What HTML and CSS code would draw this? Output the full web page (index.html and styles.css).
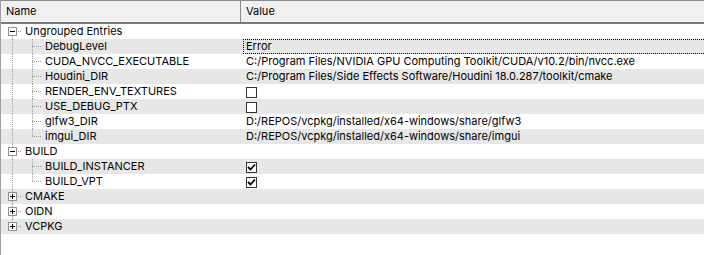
FILE: index.html
```html
<!DOCTYPE html>
<html>
<head>
<meta charset="utf-8">
<link rel="stylesheet" href="styles.css">
</head>
<body>
<div class="view">
  <div class="header">
    <div class="hcell name">Name</div>
    <div class="hcell">Value</div>
  </div>
  <div class="rows">
    <div class="row">
      <div class="ncell"><span class="br vbot h"><span class="exp minus"></span></span><span class="label">Ungrouped Entries</span></div>
      <div class="vcell"></div>
    </div>
    <div class="row alt">
      <div class="ncell"><span class="br vfull"></span><span class="br vfull h"></span><span class="label">DebugLevel</span></div>
      <div class="vcell focus">Error</div>
    </div>
    <div class="row">
      <div class="ncell"><span class="br vfull"></span><span class="br vfull h"></span><span class="label">CUDA_NVCC_EXECUTABLE</span></div>
      <div class="vcell">C:/Program Files/NVIDIA GPU Computing Toolkit/CUDA/v10.2/bin/nvcc.exe</div>
    </div>
    <div class="row alt">
      <div class="ncell"><span class="br vfull"></span><span class="br vfull h"></span><span class="label">Houdini_DIR</span></div>
      <div class="vcell">C:/Program Files/Side Effects Software/Houdini 18.0.287/toolkit/cmake</div>
    </div>
    <div class="row">
      <div class="ncell"><span class="br vfull"></span><span class="br vfull h"></span><span class="label">RENDER_ENV_TEXTURES</span></div>
      <div class="vcell"><span class="check"></span></div>
    </div>
    <div class="row alt">
      <div class="ncell"><span class="br vfull"></span><span class="br vfull h"></span><span class="label">USE_DEBUG_PTX</span></div>
      <div class="vcell"><span class="check"></span></div>
    </div>
    <div class="row">
      <div class="ncell"><span class="br vfull"></span><span class="br vfull h"></span><span class="label">glfw3_DIR</span></div>
      <div class="vcell">D:/REPOS/vcpkg/installed/x64-windows/share/glfw3</div>
    </div>
    <div class="row alt">
      <div class="ncell"><span class="br vfull"></span><span class="br vtop h"></span><span class="label">imgui_DIR</span></div>
      <div class="vcell">D:/REPOS/vcpkg/installed/x64-windows/share/imgui</div>
    </div>
    <div class="row">
      <div class="ncell"><span class="br vfull h"><span class="exp minus"></span></span><span class="label">BUILD</span></div>
      <div class="vcell"></div>
    </div>
    <div class="row alt">
      <div class="ncell"><span class="br vfull"></span><span class="br vfull h"></span><span class="label">BUILD_INSTANCER</span></div>
      <div class="vcell"><span class="check on"><svg width="9" height="9" viewBox="0 0 9 9"><path d="M1 4 L3.5 6.5 L8 1.5" fill="none" stroke="#000" stroke-width="1.8"/></svg></span></div>
    </div>
    <div class="row">
      <div class="ncell"><span class="br vfull"></span><span class="br vtop h"></span><span class="label">BUILD_VPT</span></div>
      <div class="vcell"><span class="check on"><svg width="9" height="9" viewBox="0 0 9 9"><path d="M1 4 L3.5 6.5 L8 1.5" fill="none" stroke="#000" stroke-width="1.8"/></svg></span></div>
    </div>
    <div class="row alt">
      <div class="ncell"><span class="br vfull h"><span class="exp plus"></span></span><span class="label">CMAKE</span></div>
      <div class="vcell"></div>
    </div>
    <div class="row">
      <div class="ncell"><span class="br vfull h"><span class="exp plus"></span></span><span class="label">OIDN</span></div>
      <div class="vcell"></div>
    </div>
    <div class="row alt">
      <div class="ncell"><span class="br vtop h"><span class="exp plus"></span></span><span class="label">VCPKG</span></div>
      <div class="vcell"></div>
    </div>
  </div>
</div>
</body>
</html>
```

FILE: styles.css
```css
html, body {
  margin: 0;
  padding: 0;
  background: #ffffff;
}

.view {
  width: 704px;
  height: 255px;
  box-sizing: border-box;
  border-left: 1px solid #a0a0a0;
  overflow: hidden;
  font-family: Inter, "Noto Sans", sans-serif;
  font-size: 11px;
  color: #000;
}

.header {
  display: grid;
  grid-template-columns: 240px 1fr;
  height: 24px;
  box-sizing: border-box;
  border-top: 1px solid #8a8a8a;
  border-bottom: 2px solid #7a7a7a;
  background: #f0f0f0;
}

.hcell {
  line-height: 21px;
  padding-left: 5px;
  white-space: nowrap;
}

.hcell.name {
  border-right: 1px solid #8a8a8a;
}

.rows {
  display: flex;
  flex-direction: column;
}

.row {
  display: grid;
  grid-template-columns: 241px 1fr;
  height: 15px;
  line-height: 15px;
  white-space: nowrap;
}

.row.alt {
  background: #e7e7e7;
}

.ncell {
  display: flex;
  padding-left: 1px;
  overflow: hidden;
}

.label {
  margin-left: 3px;
}

.br {
  display: flex;
  width: 20px;
  height: 15px;
  flex: none;
  --dv: repeating-linear-gradient(to bottom, #a0a0a0 0 1px, transparent 1px 2px);
  --dh: repeating-linear-gradient(to right, #a0a0a0 0 1px, transparent 1px 2px);
  background-repeat: no-repeat;
}

.br.vfull { background-image: var(--dv); background-position: 10px 0; background-size: 1px 15px; }
.br.vtop { background-image: var(--dv); background-position: 10px 0; background-size: 1px 8px; }
.br.vbot { background-image: var(--dv); background-position: 10px 8px; background-size: 1px 7px; }

.br.vfull.h { background-image: var(--dv), var(--dh); background-position: 10px 0, 10px 7px; background-size: 1px 15px, 10px 1px; }
.br.vtop.h { background-image: var(--dv), var(--dh); background-position: 10px 0, 10px 7px; background-size: 1px 8px, 10px 1px; }
.br.vbot.h { background-image: var(--dv), var(--dh); background-position: 10px 8px, 10px 7px; background-size: 1px 7px, 10px 1px; }

.exp {
  display: flex;
  align-items: center;
  justify-content: center;
  width: 9px;
  height: 9px;
  box-sizing: border-box;
  margin: 3px 0 0 6px;
  border: 1px solid #919191;
  background: #fff;
  position: relative;
}

.exp::before {
  content: "";
  width: 5px;
  height: 1px;
  background: #000;
}

.exp.plus::after {
  content: "";
  position: absolute;
  left: 3px;
  top: 1px;
  width: 1px;
  height: 5px;
  background: #000;
}

.vcell {
  padding-left: 4px;
  overflow: visible;
}

.vcell.focus {
  margin-left: 1px;
  padding-left: 2px;
  margin-right: -10px;
  box-sizing: border-box;
  height: 15px;
  line-height: 13px;
  border: 1px dotted #000;
}

.check {
  display: flex;
  align-items: center;
  justify-content: center;
  width: 11px;
  height: 11px;
  box-sizing: border-box;
  margin-top: 3px;
  border: 1px solid #333;
  background: #fff;
}
```
